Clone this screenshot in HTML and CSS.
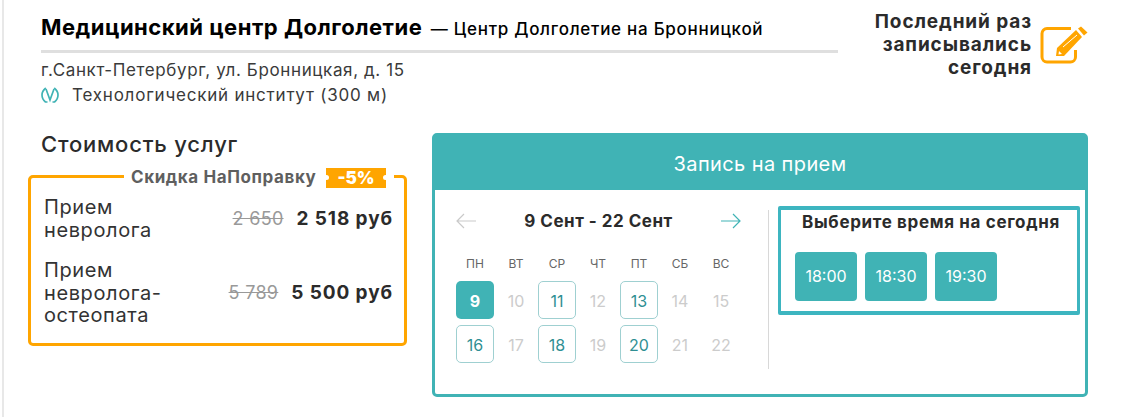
FILE: index.html
```html
<!DOCTYPE html>
<html lang="ru">
<head>
  <meta charset="UTF-8" />
  <title>Медицинский центр Долголетие</title>
  <link rel="stylesheet" href="styles.css">
</head>
<body>
  <div class="page">
    <div class="top">
      <div class="clinic">
        <div class="clinic-title">
          <strong>Медицинский центр Долголетие</strong>
          <span>— Центр Долголетие на Бронницкой</span>
        </div>
        <div class="clinic-address">г.Санкт-Петербург, ул. Бронницкая, д. 15</div>
        <div class="clinic-metro">
          <svg class="metro-icon" viewBox="0 0 18 16" width="18" height="16">
            <path d="M4.800 1C2.200 3 1 5.500 1 8c0 2.800 1.200 5.200 3.500 7H6.500M13.200 1C15.800 3 17 5.500 17 8c0 2.800-1.200 5.200-3.500 7H11.500" fill="none" stroke="#40b3b5" stroke-width="1.700"/>
            <path d="M5 2L9 13 13 2" fill="none" stroke="#40b3b5" stroke-width="1.700"/>
          </svg>
          <span>Технологический институт (300 м)</span>
        </div>
      </div>
      <div class="last-visit">
        <div class="last-visit-text">Последний раз<br>записывались<br>сегодня</div>
        <svg class="edit-icon" viewBox="0 0 48 38" width="48" height="38">
          <path d="M31 2.500H7A5 5 0 0 0 2 7.500V31A5 5 0 0 0 7 36H30.500A5 5 0 0 0 35.500 31V24" fill="none" stroke="#ffa500" stroke-width="3"/>
          <path d="M16 30L17 22 36 4 42 11 24 30Z" fill="#ffa500"/>
          <path d="M38 2.500L41 0.500 47.500 6.500 44 9.500Z" fill="#ffa500"/>
          <path d="M23 21L37 9" stroke="#fff" stroke-width="1"/>
          <path d="M18.500 28.500L19 25 22 28Z" fill="#fff"/>
        </svg>
      </div>
    </div>

    <div class="main">
      <div class="prices">
        <h2 class="prices-title">Стоимость услуг</h2>
        <div class="discount-box">
          <div class="discount-legend">
            <span>Скидка НаПоправку</span>
            <b class="discount-tag">-5%</b>
          </div>
          <div class="price-row">
            <div class="price-name">Прием<br>невролога</div>
            <s class="price-old">2 650</s>
            <div class="price-new">2 518 руб</div>
          </div>
          <div class="price-row">
            <div class="price-name">Прием<br>невролога-<br>остеопата</div>
            <s class="price-old">5 789</s>
            <div class="price-new">5 500 руб</div>
          </div>
        </div>
      </div>

      <div class="booking">
        <div class="booking-head">Запись на прием</div>
        <div class="booking-body">
          <div class="calendar">
            <div class="calendar-nav">
              <svg viewBox="0 0 20 16" width="20" height="16"><path d="M20 8H1M8 1L1 8l7 7" fill="none" stroke="#c9c9c9" stroke-width="1.200"/></svg>
              <strong>9 Сент - 22 Сент</strong>
              <svg viewBox="0 0 20 16" width="20" height="16"><path d="M0 8h19M12 1l7 7-7 7" fill="none" stroke="#40b3b5" stroke-width="1.200"/></svg>
            </div>
            <div class="calendar-grid">
              <div class="weekday">пн</div>
              <div class="weekday">вт</div>
              <div class="weekday">ср</div>
              <div class="weekday">чт</div>
              <div class="weekday">пт</div>
              <div class="weekday">сб</div>
              <div class="weekday">вс</div>
              <div class="day day-active">9</div>
              <div class="day">10</div>
              <div class="day day-open">11</div>
              <div class="day">12</div>
              <div class="day day-open">13</div>
              <div class="day">14</div>
              <div class="day">15</div>
              <div class="day day-open">16</div>
              <div class="day">17</div>
              <div class="day day-open">18</div>
              <div class="day">19</div>
              <div class="day day-open">20</div>
              <div class="day">21</div>
              <div class="day">22</div>
            </div>
          </div>
          <div class="times">
            <div class="times-title">Выберите время на сегодня</div>
            <div class="times-list">
              <div class="time">18:00</div>
              <div class="time">18:30</div>
              <div class="time">19:30</div>
            </div>
          </div>
        </div>
      </div>
    </div>
  </div>
</body>
</html>
```

FILE: styles.css
```css
body {
  margin: 0;
  background-color: #fff;
  color: #2b2b2b;
  font-family: Inter, 'Open Sans', sans-serif;
}

.page {
  height: 417px;
  box-sizing: border-box;
  margin-left: 2px;
  border-left: 2px solid #e8e8e8;
  padding: 13px 38px 0 24px;
  overflow: hidden;
}

.top {
  display: flex;
  justify-content: space-between;
  padding-left: 13px;
}

.clinic {
  width: 797px;
}

.clinic-title {
  height: 40px;
  box-sizing: border-box;
  border-bottom: 3px solid #dfdfdf;
  line-height: 28px;
  white-space: nowrap;
  color: #000;
}

.clinic-title strong {
  font-size: 22px;
  font-weight: 700;
  letter-spacing: 0.5px;
}

.clinic-title span {
  font-size: 17px;
  font-weight: 500;
  letter-spacing: 0.72px;
  margin-left: 4px;
}

.clinic-address {
  margin-top: 6px;
  font-size: 17px;
  letter-spacing: 0.62px;
  line-height: 22px;
  color: #3a3a3a;
}

.clinic-metro {
  display: flex;
  align-items: center;
  gap: 13px;
  margin-top: 3px;
  font-size: 17px;
  letter-spacing: 0.78px;
  line-height: 22px;
  color: #3a3a3a;
}

.last-visit {
  display: flex;
  gap: 8px;
}

.last-visit-text {
  font-size: 19px;
  font-weight: 700;
  letter-spacing: 0.9px;
  line-height: 23px;
  text-align: right;
  margin-top: -3px;
}

.edit-icon {
  margin-top: 13px;
}

.main {
  display: flex;
  justify-content: space-between;
  margin-top: 27px;
}

.prices {
  width: 379px;
}

.prices-title {
  margin: -2px 0 18px 13px;
  font-size: 22px;
  font-weight: 500;
  letter-spacing: 0.8px;
  line-height: 26px;
}

.discount-box {
  position: relative;
  height: 171px;
  box-sizing: border-box;
  border: 3px solid #ffa500;
  border-radius: 5px;
  padding: 18px 11px 0 13px;
}

.discount-legend {
  position: absolute;
  top: -10px;
  left: 93px;
  display: flex;
  align-items: center;
  gap: 10px;
  background-color: #fff;
  padding: 0 8px 0 7px;
  font-size: 17px;
  font-weight: 700;
  letter-spacing: 0.6px;
  line-height: 20px;
  color: #5f5f5f;
}

.discount-legend span {
  margin-top: -2px;
}

.discount-tag {
  position: relative;
  background-color: #ffa500;
  color: #fff;
  padding: 0 11px;
  font-size: 17px;
  letter-spacing: 0;
  line-height: 20px;
}

.discount-tag::before,
.discount-tag::after {
  content: "";
  position: absolute;
  top: 7px;
  width: 5px;
  height: 5px;
  border-radius: 50%;
  background-color: #fff;
}

.discount-tag::before {
  left: -2px;
}

.discount-tag::after {
  right: -2px;
}

.price-row {
  display: flex;
  align-items: center;
  margin-bottom: 18px;
}

.price-name {
  flex: 1;
  font-size: 20px;
  letter-spacing: 0.6px;
  line-height: 22.5px;
  color: #333;
}

.price-old {
  font-size: 18px;
  letter-spacing: 0.3px;
  color: #999;
  margin-right: 13px;
}

.price-new {
  font-size: 19px;
  font-weight: 700;
  letter-spacing: 0.9px;
}

.booking {
  width: 656px;
  height: 264px;
  box-sizing: border-box;
  border: 3px solid #40b3b5;
  border-radius: 5px;
}

.booking-head {
  height: 54px;
  background-color: #40b3b5;
  color: #fff;
  font-size: 20px;
  letter-spacing: 0.4px;
  line-height: 56px;
  text-align: center;
}

.booking-body {
  display: flex;
  padding: 16px 5px 0 21px;
}

.calendar {
  width: 312px;
  height: 159px;
  border-right: 1px solid #d8d8d8;
  margin-top: 4px;
}

.calendar-nav {
  display: flex;
  justify-content: space-between;
  align-items: center;
  width: 285px;
  height: 22px;
  font-size: 17px;
  letter-spacing: 0.5px;
}

.calendar-grid {
  display: grid;
  grid-template-columns: repeat(7, 38px);
  grid-auto-rows: 38px;
  gap: 6px 3px;
  margin-top: 5px;
}

.weekday {
  align-self: end;
  padding-bottom: 4px;
  font-size: 12px;
  text-align: center;
  text-transform: uppercase;
  color: #666;
}

.day {
  display: flex;
  align-items: center;
  justify-content: center;
  box-sizing: border-box;
  padding-top: 2px;
  border-radius: 5px;
  font-size: 16px;
  color: #ccc;
}

.day-open {
  border: 1px solid #9fd0d1;
  color: #2f8f93;
}

.day-active {
  background-color: #40b3b5;
  color: #fff;
  font-weight: 700;
}

.times {
  width: 302px;
  height: 109px;
  box-sizing: border-box;
  margin-left: 9px;
  border: 3px solid #3db5c0;
  border-top-width: 4px;
  border-bottom-width: 4px;
  border-radius: 2px;
  padding: 2px 14px 0;
}

.times-title {
  padding-left: 4px;
  font-size: 17px;
  font-weight: 700;
  letter-spacing: 0.65px;
  line-height: 20px;
  text-align: center;
  white-space: nowrap;
}

.times-list {
  display: flex;
  gap: 8px;
  margin-top: 20px;
}

.time {
  width: 62px;
  height: 49px;
  border-radius: 4px;
  background-color: #40b3b5;
  color: #fff;
  font-size: 16px;
  line-height: 49px;
  text-align: center;
}
```
